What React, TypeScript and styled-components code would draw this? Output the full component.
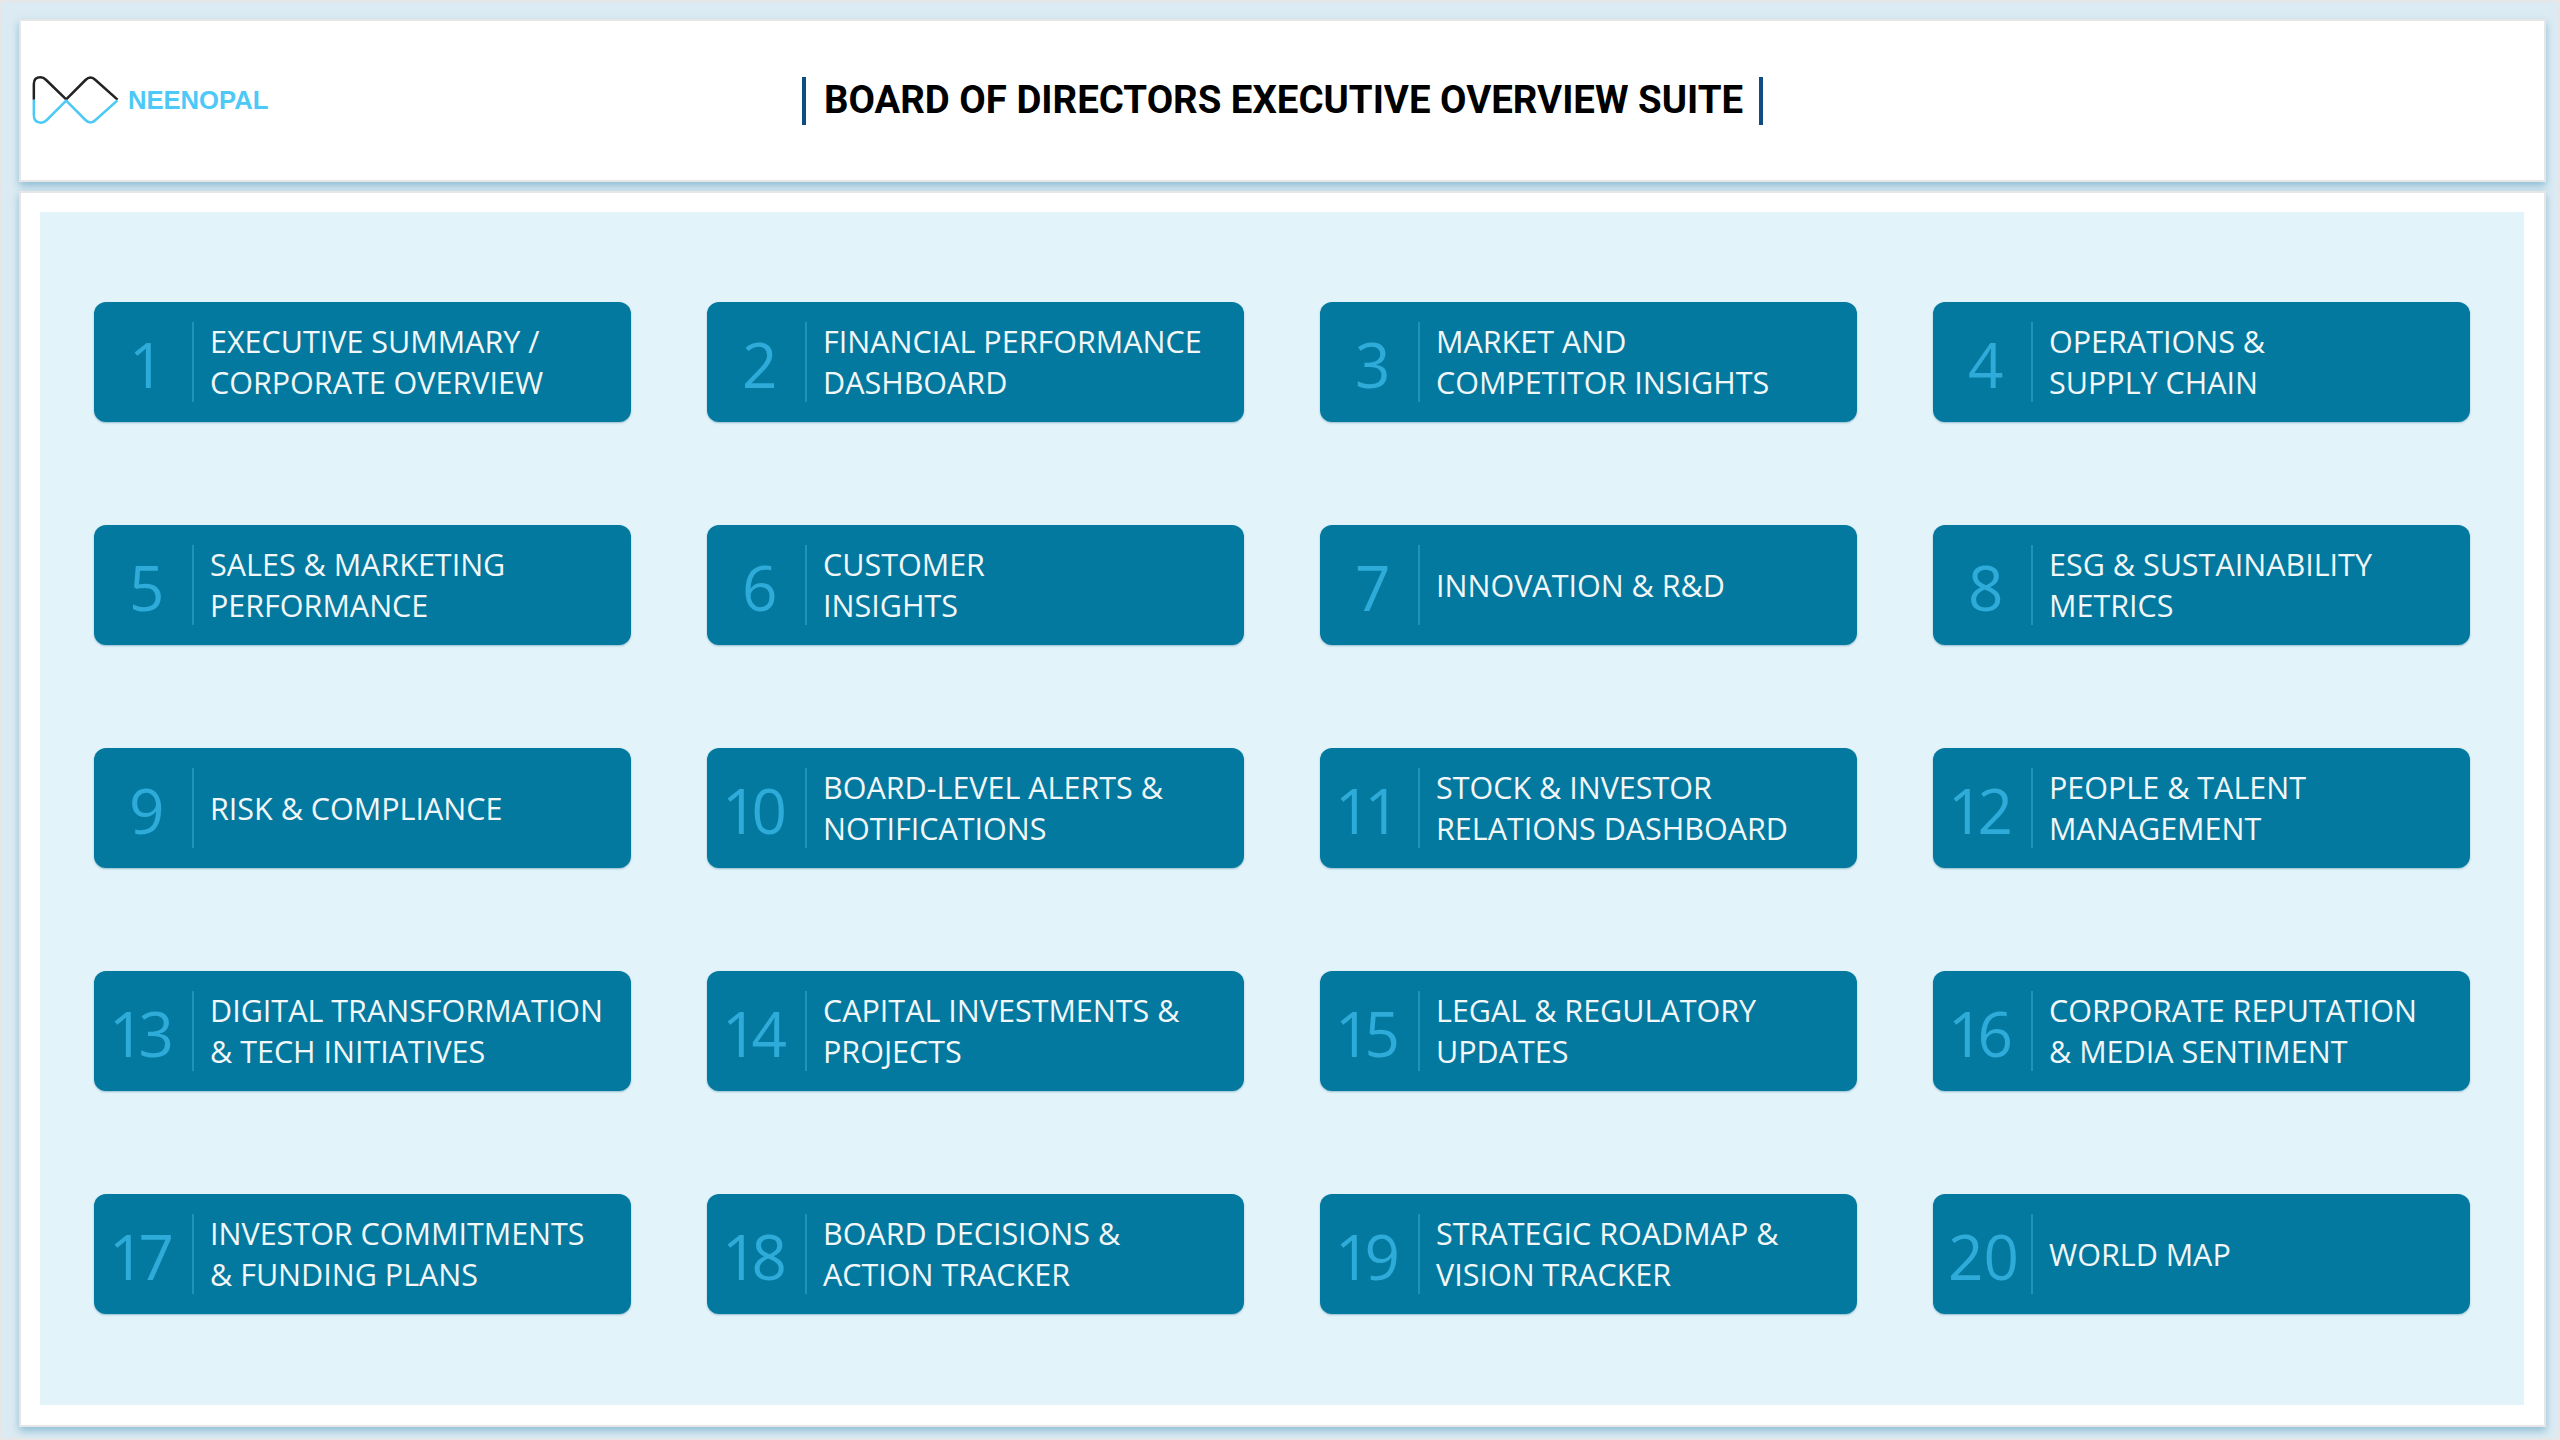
import React from "react";
import styled, { createGlobalStyle } from "styled-components";

const Global = createGlobalStyle`
  html, body { margin: 0; padding: 0; background: #dcebf3; }
  * { box-sizing: border-box; }
`;

const Page = styled.div`
  width: 2560px;
  height: 1440px;
  display: flex;
  flex-direction: column;
  gap: 9px;
  padding: 17px 12px 12px 17px;
  background: #dcebf3;
  border: 2px solid #e6e6e6;
  overflow: hidden;
`;

const Header = styled.header`
  height: 163px;
  flex: none;
  display: grid;
  grid-template-columns: 1fr auto 1fr;
  align-items: center;
  background: #fff;
  border: 2px solid #e6e6e6;
  box-shadow: 0 4px 8px rgba(100, 165, 195, 0.65);
`;

const Brand = styled.div`
  display: flex;
  align-items: center;
  gap: 9px;
  padding: 0 0 2px 11px;
`;

const BrandName = styled.span`
  font-family: "Liberation Sans", Arial, sans-serif;
  font-weight: 700;
  font-size: 25.6px;
  color: #4cc9f6;
  position: relative;
  top: 1px;
`;

const Title = styled.h1`
  margin: 0;
  height: 48px;
  padding: 0 16px 3px 18px;
  display: flex;
  align-items: center;
  border-left: 4px solid #0f4c81;
  border-right: 4px solid #0f4c81;
  font-family: Roboto, "Liberation Sans", sans-serif;
  font-weight: 700;
  font-size: 38.4px;
  color: #000;
  white-space: nowrap;
`;

const Body = styled.main`
  flex: none;
  height: 1236px;
  background: #fff;
  border: 2px solid #e6e6e6;
  box-shadow: 0 4px 8px rgba(100, 165, 195, 0.65);
  padding: 19px 20px 20px 19px;
`;

const Panel = styled.section`
  height: 100%;
  background: #e2f3fa;
  padding: 90px 54px 91px 54px;
  display: grid;
  grid-template-columns: repeat(4, 537px);
  grid-template-rows: repeat(5, 120px);
  justify-content: space-between;
  align-content: space-between;
`;

const Tile = styled.div`
  display: flex;
  align-items: center;
  background: #04799f;
  border-radius: 12px;
  box-shadow: 0 1px 2px rgba(4, 90, 120, 0.35);
`;

const Num = styled.div<{ $value: number }>`
  flex: none;
  width: 98px;
  padding-left: ${(p) => (p.$value < 10 ? 35 : 15)}px;
  letter-spacing: ${(p) => (p.$value >= 10 && p.$value < 20 ? -6 : 0)}px;
  font-family: "Open Sans", sans-serif;
  font-weight: 500;
  font-size: 62px;
  line-height: 1;
  color: #2eabd9;
  position: relative;
  top: 2px;
`;

const Rule = styled.div`
  flex: none;
  width: 2px;
  height: 80px;
  background: #1f93bb;
`;

const Label = styled.div`
  padding-left: 16px;
  font-family: "Open Sans", sans-serif;
  font-weight: 500;
  font-size: 30.5px;
  line-height: 40.6px;
  color: #f2f7f9;
  white-space: pre-line;
`;

const items = [
  "EXECUTIVE SUMMARY /\nCORPORATE OVERVIEW",
  "FINANCIAL PERFORMANCE\nDASHBOARD",
  "MARKET AND\nCOMPETITOR INSIGHTS",
  "OPERATIONS &\nSUPPLY CHAIN",
  "SALES & MARKETING\nPERFORMANCE",
  "CUSTOMER\nINSIGHTS",
  "INNOVATION & R&D",
  "ESG & SUSTAINABILITY\nMETRICS",
  "RISK & COMPLIANCE",
  "BOARD-LEVEL ALERTS &\nNOTIFICATIONS",
  "STOCK & INVESTOR\nRELATIONS DASHBOARD",
  "PEOPLE & TALENT\nMANAGEMENT",
  "DIGITAL TRANSFORMATION\n& TECH INITIATIVES",
  "CAPITAL INVESTMENTS &\nPROJECTS",
  "LEGAL & REGULATORY\nUPDATES",
  "CORPORATE REPUTATION\n& MEDIA SENTIMENT",
  "INVESTOR COMMITMENTS\n& FUNDING PLANS",
  "BOARD DECISIONS &\nACTION TRACKER",
  "STRATEGIC ROADMAP &\nVISION TRACKER",
  "WORLD MAP",
];

const Logo = () => (
  <svg width="87" height="50" viewBox="95 225 260 150" fill="none" strokeWidth="7.5" strokeLinejoin="round">
    <path
      d="M100 299V252Q100 232 120 232Q129 232 137 240L197 298L255 240Q270 225 285 240L351 299"
      stroke="#222"
    />
    <path
      d="M100 299V346Q100 368 122 368Q131 368 139 360L197 302L255 360Q270 375 285 360L351 301"
      stroke="#4cc9f6"
    />
  </svg>
);

export default function App() {
  return (
    <>
      <Global />
      <Page>
        <Header>
          <Brand>
            <Logo />
            <BrandName>NEENOPAL</BrandName>
          </Brand>
          <Title>BOARD OF DIRECTORS EXECUTIVE OVERVIEW SUITE</Title>
          <div />
        </Header>
        <Body>
          <Panel>
            {items.map((label, i) => (
              <Tile key={label}>
                <Num $value={i + 1}>{i + 1}</Num>
                <Rule />
                <Label>{label}</Label>
              </Tile>
            ))}
          </Panel>
        </Body>
      </Page>
    </>
  );
}
